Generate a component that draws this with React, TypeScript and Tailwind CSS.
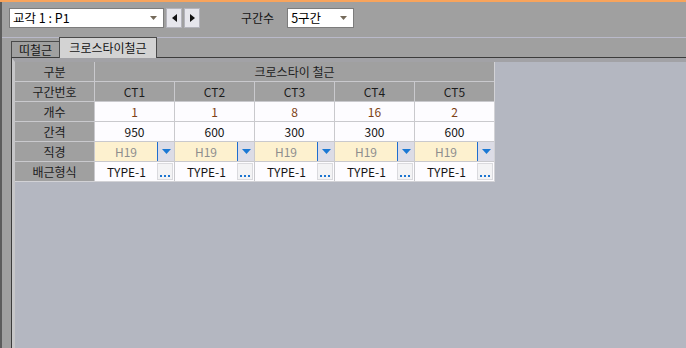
const cols = ["CT1", "CT2", "CT3", "CT4", "CT5"];
const counts = ["1", "1", "8", "16", "2"];
const spacing = ["950", "600", "300", "300", "600"];

function Combo({ text, width }: { text: string; width: string }) {
  return (
    <div className={`${width} h-[20px] bg-white border border-[#7c7c7c] flex items-center pl-[3px] pr-[6px]`}>
      <span className="flex-1 text-[12.5px] text-black leading-none">{text}</span>
      <svg width="7" height="4" viewBox="0 0 7 4">
        <path d="M0 0 H7 L3.5 4 Z" fill="#756a5a" />
      </svg>
    </div>
  );
}

function NavButton({ dir }: { dir: "left" | "right" }) {
  return (
    <div className="w-[16px] h-[20px] bg-[#e6e6ec] border border-[#b4b4bc] flex items-center justify-center">
      <svg width="5" height="8" viewBox="0 0 5 8">
        {dir === "left" ? <path d="M5 0 V8 L0 4 Z" fill="#111" /> : <path d="M0 0 V8 L5 4 Z" fill="#111" />}
      </svg>
    </div>
  );
}

function Head({ children, className = "" }: { children?: React.ReactNode; className?: string }) {
  return (
    <div className={`bg-[#a0a0a0] text-[#1c1c1c] flex items-center justify-center ${className}`}>{children}</div>
  );
}

function Cell({ children, className = "" }: { children?: React.ReactNode; className?: string }) {
  return <div className={`bg-[#fdfcff] flex items-center justify-center ${className}`}>{children}</div>;
}

export default function App() {
  return (
    <div
      className="w-[686px] h-[348px] overflow-hidden flex flex-col bg-[#a0a0a0] text-[12px]"
      style={{ fontFamily: '"Noto Sans CJK KR", "Noto Sans", sans-serif' }}
    >
      <div className="h-[2px] bg-[#f8a45c]" />
      <div className="flex-1 flex flex-col border-l-2 border-[#5c5c5c]">
        {/* toolbar */}
        <div className="flex items-center pt-[6px] pl-[7px]">
          <Combo text="교각 1 : P1" width="w-[155px]" />
          <div className="flex gap-[2px] ml-[2px]">
            <NavButton dir="left" />
            <NavButton dir="right" />
          </div>
          <span className="ml-[41px] text-[#141414]">구간수</span>
          <div className="ml-[13px]">
            <Combo text="5구간" width="w-[67px]" />
          </div>
        </div>

        {/* tabs */}
        <div className="mt-[9px] relative flex items-end pl-[9px] h-[20px] border-t border-[#b9b9c9]">
          <div className="h-[16px] w-[48px] border-l border-t border-[#4a4a4a] flex items-center justify-center text-[#141414] leading-none">
            띠철근
          </div>
          <div className="h-[21px] -mt-px mb-[-1px] w-[98px] relative z-10 bg-[#d3d3d3] border-l border-t border-r border-[#4a4a4a] flex items-center justify-center text-[#141414] leading-none">
            크로스타이철근
          </div>
        </div>

        {/* panel */}
        <div className="flex-1 ml-[9px] border-t border-l border-[#3c3c3c] flex flex-col">
          <div className="flex-1 border-t-[4px] border-t-[#a2a2a6] border-l-[3px] border-l-[#c6c6c8] bg-[#b4b7c1]">
            <div className="w-fit border-r border-b border-[#d2d2d6]">
              <div className="grid grid-cols-[79px_repeat(5,79px)] auto-rows-[19px] gap-px bg-[#c9c9cd]">
                <Head>구분</Head>
                <Head className="col-span-5">크로스타이 철근</Head>

                <Head>구간번호</Head>
                {cols.map((c) => (
                  <Head key={c}>{c}</Head>
                ))}

                <Head>개수</Head>
                {counts.map((c, i) => (
                  <Cell key={i} className="text-[#7e4216]">
                    {c}
                  </Cell>
                ))}

                <Head>간격</Head>
                {spacing.map((c, i) => (
                  <Cell key={i} className="text-[#141414]">
                    {c}
                  </Cell>
                ))}

                <Head>직경</Head>
                {cols.map((c) => (
                  <div key={c} className="bg-[#fdf1cf] flex">
                    <span className="flex-1 flex items-center justify-center text-[#8e8e8e]">H19</span>
                    <div className="w-[17px] bg-[#dcdce6] border-l border-[#1f6ed0] flex items-center justify-center">
                      <svg width="9" height="5" viewBox="0 0 9 5">
                        <path d="M0 0 H9 L4.5 5 Z" fill="#1a78d4" />
                      </svg>
                    </div>
                  </div>
                ))}

                <Head>배근형식</Head>
                {cols.map((c) => (
                  <div key={c} className="bg-[#fdfcff] flex">
                    <span className="flex-1 flex items-center justify-center text-[#141414] pl-[1px]">TYPE-1</span>
                    <div className="w-[16px] my-[1px] mr-[1px] bg-[#f3f3f5] border border-[#dadade] flex items-end justify-center gap-[2px] pb-[2px]">
                      <span className="w-[2px] h-[2px] bg-[#1a74d0]" />
                      <span className="w-[2px] h-[2px] bg-[#1a74d0]" />
                      <span className="w-[2px] h-[2px] bg-[#1a74d0]" />
                    </div>
                  </div>
                ))}
              </div>
            </div>
          </div>
        </div>
      </div>
    </div>
  );
}
